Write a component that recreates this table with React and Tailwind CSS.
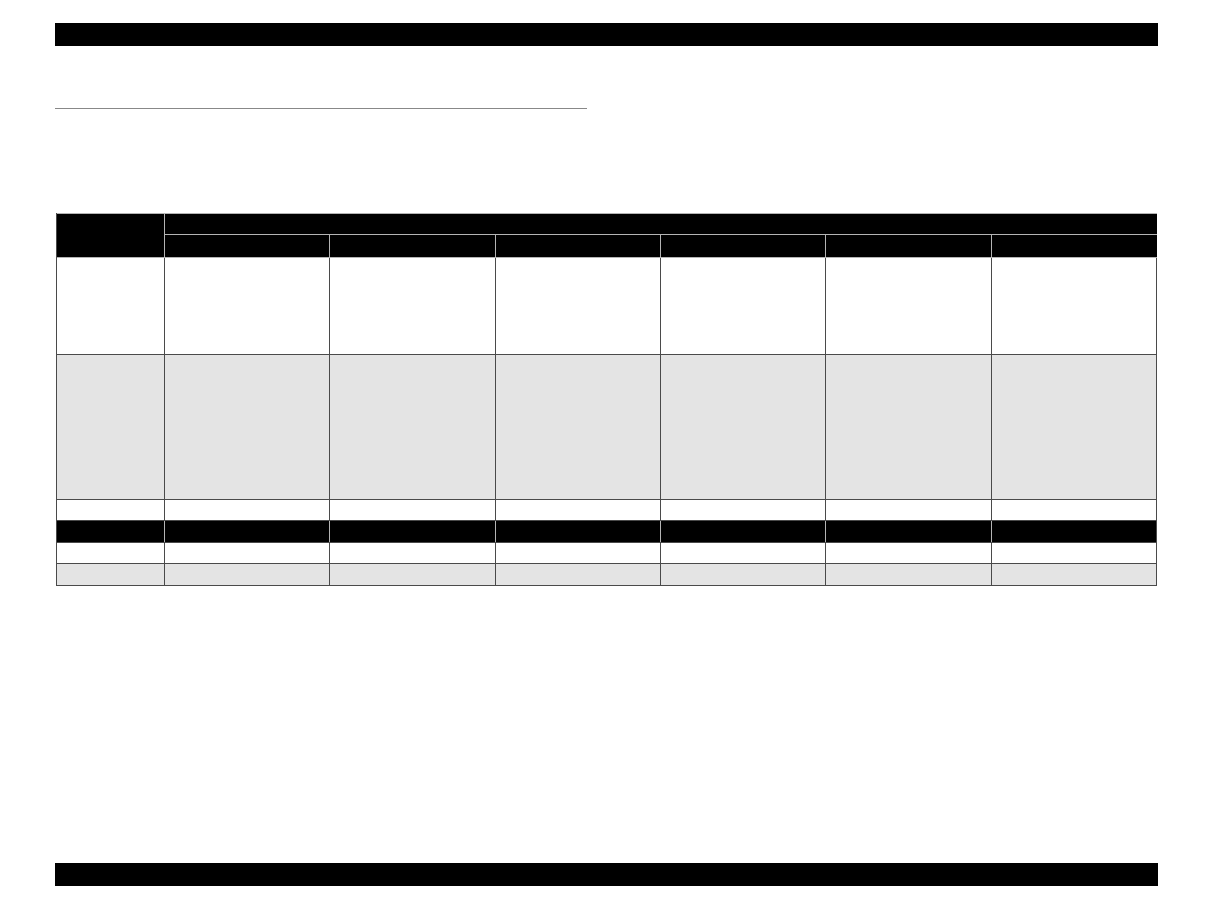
import React from 'react';

const cols = [0, 1, 2, 3, 4, 5, 6];

const bodyRows = [
    { h: 'h-[97px]', bg: 'bg-white', line: 'border-[#4a4a4a]' },
    { h: 'h-[145px]', bg: 'bg-[#e4e4e4]', line: 'border-[#4a4a4a]' },
    { h: 'h-[21px]', bg: 'bg-white', line: 'border-[#4a4a4a]' },
    { h: 'h-[22px]', bg: 'bg-black', line: 'border-[#b4b4b4]' },
    { h: 'h-[21px]', bg: 'bg-white', line: 'border-[#4a4a4a]' },
    { h: 'h-[22px]', bg: 'bg-[#e4e4e4]', line: 'border-[#4a4a4a]' },
];

const App = () => {
    return (
        <div className="w-full h-[909px] bg-white overflow-hidden font-['Liberation_Sans',sans-serif]">
            <div className="ml-[55px] w-[1103px]">
                {/* running header */}
                <div className="mt-[23px] h-[23px] bg-black" />

                {/* section rule */}
                <div className="mt-[62px] h-px w-[532px] bg-[#888]" />

                {/* table */}
                <div className="mt-[104px] ml-px w-[1101px] border-l border-[#4a4a4a]">
                    <div className="grid grid-cols-[108px_repeat(6,minmax(0,1fr))] grid-rows-[21px_22px] bg-black border-t border-b border-[#b4b4b4] box-content">
                        <div className="row-span-2 border-r border-[#b4b4b4]" />
                        <div className="col-span-6 border-b border-[#b4b4b4]" />
                        {cols.slice(1).map((c) => (
                            <div
                                key={c}
                                className={c === 6 ? 'border-r border-black' : 'border-r border-[#b4b4b4]'}
                            />
                        ))}
                    </div>

                    {bodyRows.map((row, i) => (
                        <div
                            key={i}
                            className={`grid grid-cols-[108px_repeat(6,minmax(0,1fr))] border-b box-border ${row.h} ${row.bg} ${
                                i === 3 ? 'border-[#4a4a4a]' : 'border-[#4a4a4a]'
                            }`}
                        >
                            {cols.map((c) => (
                                <div
                                    key={c}
                                    className={`border-r ${c === 6 ? 'border-[#4a4a4a]' : row.line}`}
                                />
                            ))}
                        </div>
                    ))}
                </div>

                {/* running footer */}
                <div className="mt-[277px] h-[23px] bg-black" />
            </div>
        </div>
    );
};

export default App;
